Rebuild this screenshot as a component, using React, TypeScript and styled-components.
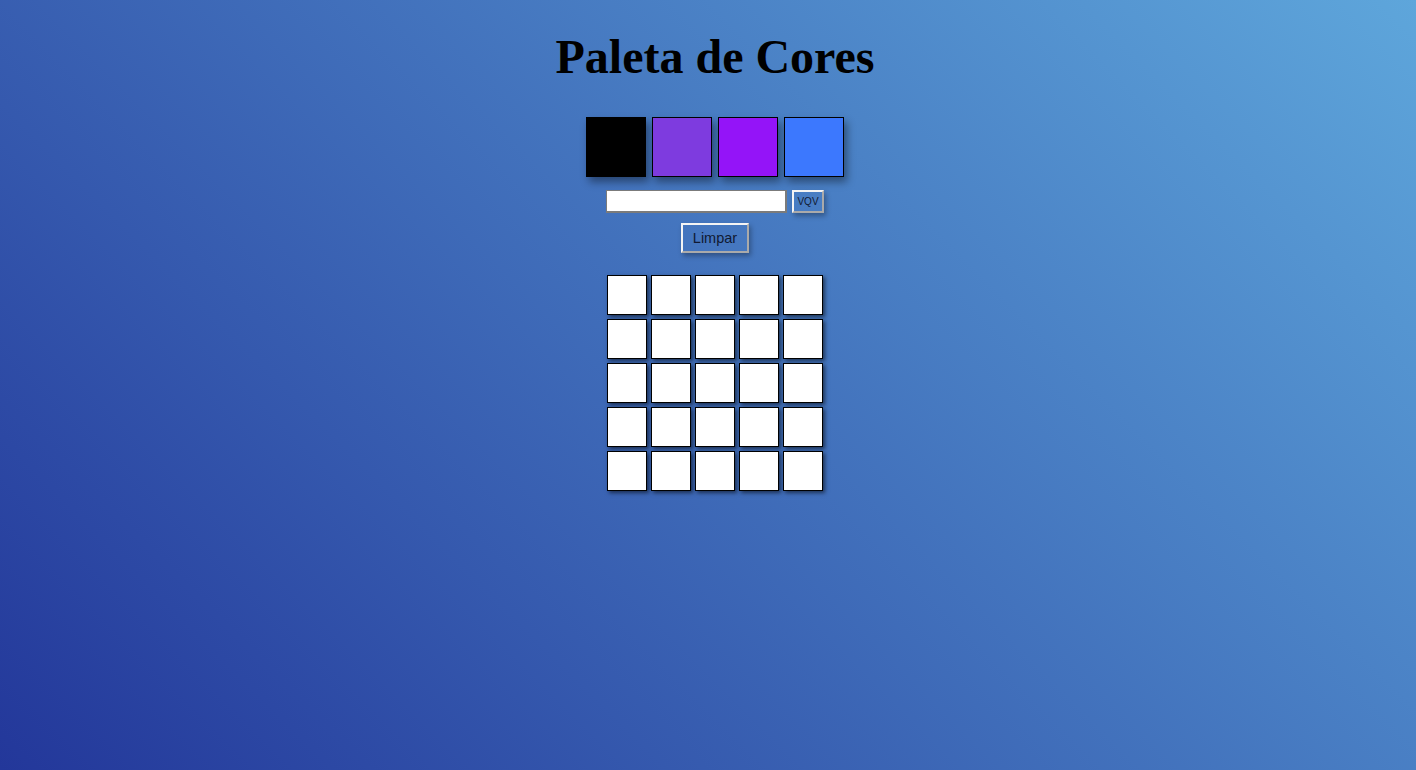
import React from "react";
import styled, { createGlobalStyle } from "styled-components";

const Global = createGlobalStyle`
  html, body { margin: 0; padding: 0; }
  body {
    min-height: 100vh;
    background: linear-gradient(45deg, #23379a 0%, #5ea6db 100%);
    font-family: "Liberation Sans", Arial, sans-serif;
  }
`;

const Page = styled.main`
  min-height: 100vh;
  display: flex;
  flex-direction: column;
  align-items: center;
  padding-left: 14px;
  box-sizing: border-box;
`;

const Title = styled.h1`
  margin: 29px 0 0;
  font-family: "Liberation Serif", "Times New Roman", serif;
  font-weight: 700;
  font-size: 48px;
  line-height: 55px;
  color: #000;
`;

const Palette = styled.section`
  margin-top: 33px;
  display: flex;
  gap: 6px;
`;

const Swatch = styled.div<{ $color: string }>`
  width: 60px;
  height: 60px;
  box-sizing: border-box;
  border: 1px solid #000;
  background: ${(p) => p.$color};
  box-shadow: 3px 5px 8px rgba(0, 0, 0, 0.4);
`;

const InputRow = styled.div`
  margin-top: 13px;
  display: flex;
  gap: 5px;
  align-items: center;
`;

const SizeInput = styled.input`
  width: 181px;
  height: 23px;
  box-sizing: border-box;
  border-style: solid;
  border-width: 1px 2px 2px 1px;
  border-color: #7b7b7b;
  background: #fff;
  padding: 1px 2px;
  font-size: 13px;
  outline: none;
`;

const OutsetButton = styled.button<{ $small?: boolean }>`
  box-sizing: border-box;
  background: transparent;
  border: 2px solid;
  border-color: #f4f4f4 #aaaaaa #aaaaaa #f4f4f4;
  box-shadow: 2px 3px 5px rgba(0, 0, 0, 0.3);
  color: #111a33;
  font-family: "Liberation Sans", Arial, sans-serif;
  padding: 0;
  cursor: pointer;
  width: ${(p) => (p.$small ? "32px" : "68px")};
  height: ${(p) => (p.$small ? "23px" : "30px")};
  font-size: ${(p) => (p.$small ? "10px" : "14.5px")};
`;

const ClearButton = styled(OutsetButton)`
  margin-top: 10px;
`;

const Board = styled.section`
  margin-top: 22px;
  display: grid;
  grid-template-columns: repeat(5, 40px);
  grid-auto-rows: 40px;
  gap: 4px;
`;

const Pixel = styled.div`
  box-sizing: border-box;
  border: 1px solid #000;
  background: #fff;
  box-shadow: 2px 2px 4px rgba(0, 0, 0, 0.55);
`;

const colors = ["#000000", "#7e3bdf", "#9414f8", "#3c78fe"];

export default function App() {
  return (
    <>
      <Global />
      <Page>
        <Title>Paleta de Cores</Title>
        <Palette>
          {colors.map((c) => (
            <Swatch key={c} $color={c} />
          ))}
        </Palette>
        <InputRow>
          <SizeInput type="number" min={1} />
          <OutsetButton $small>VQV</OutsetButton>
        </InputRow>
        <ClearButton>Limpar</ClearButton>
        <Board>
          {Array.from({ length: 25 }, (_, i) => (
            <Pixel key={i} />
          ))}
        </Board>
      </Page>
    </>
  );
}
